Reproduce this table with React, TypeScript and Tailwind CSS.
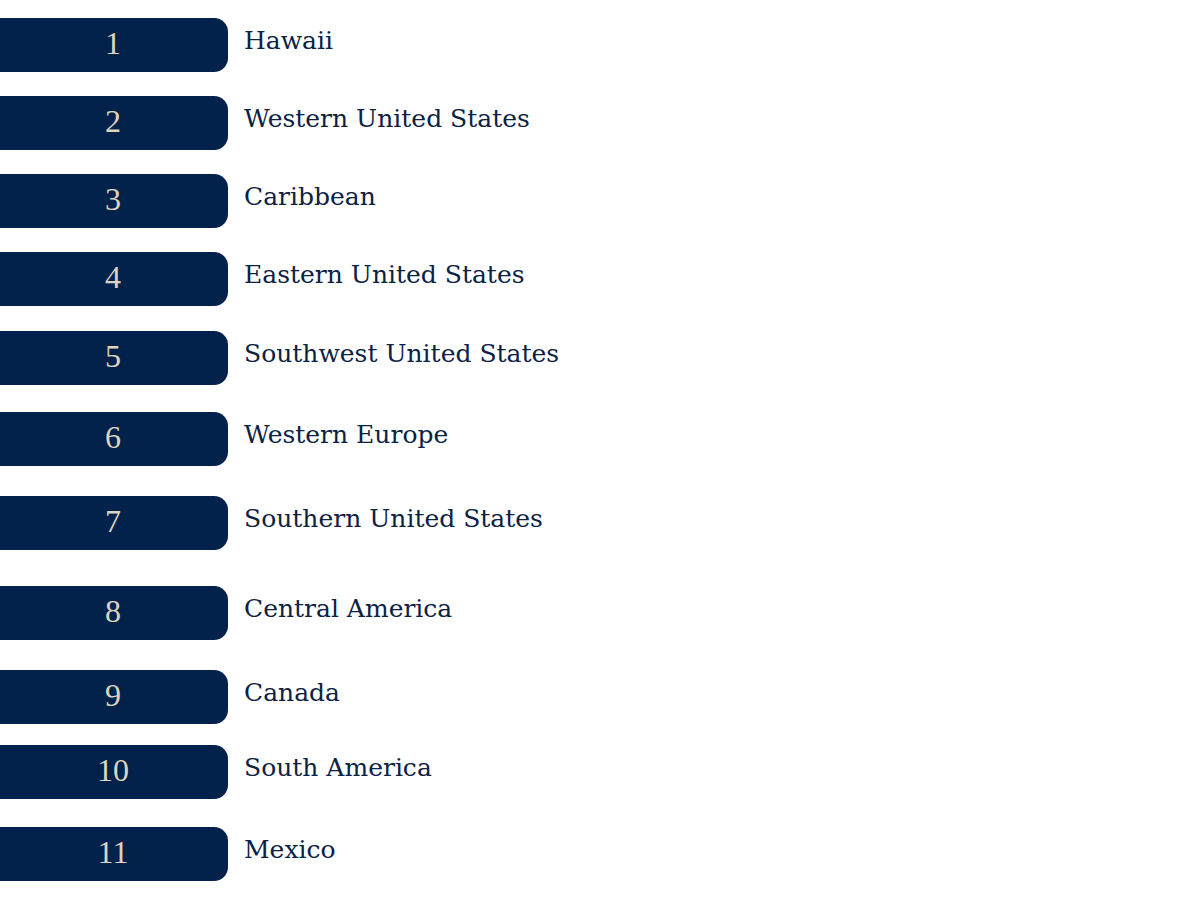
const regions = [
  { rank: 1, name: "Hawaii", gap: "mt-[18px]" },
  { rank: 2, name: "Western United States", gap: "mt-[24px]" },
  { rank: 3, name: "Caribbean", gap: "mt-[24px]" },
  { rank: 4, name: "Eastern United States", gap: "mt-[24px]" },
  { rank: 5, name: "Southwest United States", gap: "mt-[25px]" },
  { rank: 6, name: "Western Europe", gap: "mt-[27px]" },
  { rank: 7, name: "Southern United States", gap: "mt-[30px]" },
  { rank: 8, name: "Central America", gap: "mt-[36px]" },
  { rank: 9, name: "Canada", gap: "mt-[30px]" },
  { rank: 10, name: "South America", gap: "mt-[21px]" },
  { rank: 11, name: "Mexico", gap: "mt-[28px]" },
];

export default function App() {
  return (
    <div className="w-[1200px] h-[900px] bg-white overflow-hidden font-['Liberation_Serif',serif]">
      <div className="flex flex-col">
        {regions.map((r) => (
          <div key={r.rank} className={`flex items-start ${r.gap}`}>
            <div className="w-[228px] h-[54px] shrink-0 bg-[#02214b] rounded-r-[14px] flex justify-center">
              <span className="pt-[9px] text-[32px] leading-[32px] text-[#dcd4bf] pr-[2px]">
                {r.rank}
              </span>
            </div>
            <div className="pl-4 mt-[10px] font-['DejaVu_Serif',serif] text-[25px] leading-[25px] text-[#0c2244]">
              {r.name}
            </div>
          </div>
        ))}
      </div>
    </div>
  );
}
